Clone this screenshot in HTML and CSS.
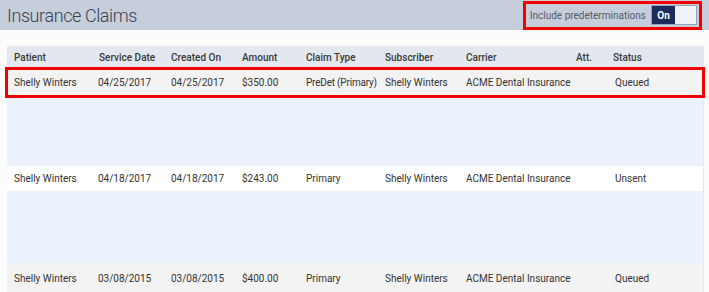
FILE: index.html
```html
<!DOCTYPE html>
<html lang="en">
<head>
  <meta charset="UTF-8" />
  <title>Insurance Claims</title>
  <link rel="stylesheet" href="styles.css">
</head>
<body>

<div class="page-header">
  <h1>Insurance Claims</h1>
  <div class="predet highlight">
    <span>Include predeterminations</span>
    <div class="toggle">
      <span class="toggle-on">On</span>
      <span class="toggle-off"></span>
    </div>
  </div>
</div>

<div class="claims">
  <div class="row head">
    <div>Patient</div>
    <div>Service Date</div>
    <div>Created On</div>
    <div>Amount</div>
    <div>Claim Type</div>
    <div>Subscriber</div>
    <div>Carrier</div>
    <div>Att.</div>
    <div>Status</div>
  </div>

  <div class="row grey highlight">
    <div>Shelly Winters</div>
    <div class="date">04/25/2017</div>
    <div>04/25/2017</div>
    <div>$350.00</div>
    <div class="tight">PreDet (Primary)</div>
    <div>Shelly Winters</div>
    <div>ACME Dental Insurance</div>
    <div></div>
    <div class="status">Queued</div>
  </div>
  <div class="details d1"></div>

  <div class="row white">
    <div>Shelly Winters</div>
    <div class="date">04/18/2017</div>
    <div>04/18/2017</div>
    <div>$243.00</div>
    <div>Primary</div>
    <div>Shelly Winters</div>
    <div>ACME Dental Insurance</div>
    <div></div>
    <div class="status">Unsent</div>
  </div>
  <div class="details d2"></div>

  <div class="row grey last">
    <div>Shelly Winters</div>
    <div class="date">03/08/2015</div>
    <div>03/08/2015</div>
    <div>$400.00</div>
    <div>Primary</div>
    <div>Shelly Winters</div>
    <div>ACME Dental Insurance</div>
    <div></div>
    <div class="status">Queued</div>
  </div>
</div>

</body>
</html>
```

FILE: styles.css
```css
body {
  margin: 0;
  background: #fcfcfc;
  font-family: Roboto, "Liberation Sans", sans-serif;
  font-size: 10px;
  color: #333;
}

.page-header {
  height: 30px;
  background: #c6cedc;
  display: flex;
  align-items: center;
  justify-content: space-between;
  padding: 0 9px 0 7px;
}

.page-header h1 {
  margin: 0;
  font-size: 18px;
  font-weight: 300;
  letter-spacing: -0.4px;
  color: #3b4150;
}

.predet {
  display: flex;
  align-items: center;
  gap: 5px;
  height: 25px;
  padding: 0 3px 0 5px;
  color: #555b66;
  font-size: 10px;
}

.highlight {
  outline: 3px solid #f20000;
  outline-offset: -1px;
}

.toggle {
  display: flex;
  height: 20px;
  border: 1px solid #9aa3b5;
  box-sizing: border-box;
}

.toggle-on {
  width: 23px;
  background: #1b2c5c;
  color: #fff;
  font-weight: 700;
  display: flex;
  align-items: center;
  justify-content: center;
}

.toggle-off {
  width: 21px;
  background: #f0f2fa;
}

.claims {
  margin: 16px 6px 0 7px;
  box-shadow: 1px 0 0 #e8e8e8;
}

.row {
  display: grid;
  grid-template-columns: 85px 72px 71px 64px 79px 81px 110px 37px 1fr;
  align-items: center;
  padding-left: 7px;
  white-space: nowrap;
}

.row.head {
  height: 23px;
  background: #e3e7ee;
  font-weight: 500;
  color: #3a3a3a;
}

.row.grey {
  height: 27px;
  background: #f3f3f3;
}

.row.white {
  height: 25px;
  background: #fff;
}

.row.last {
  height: 30px;
}

.row .date {
  margin-left: -1px;
}

.row .status {
  margin-left: 2px;
}

.row .tight {
  letter-spacing: -0.2px;
}

.details {
  background: #ecf2fd;
}

.d1 { height: 70px; }
.d2 { height: 72px; }
```
